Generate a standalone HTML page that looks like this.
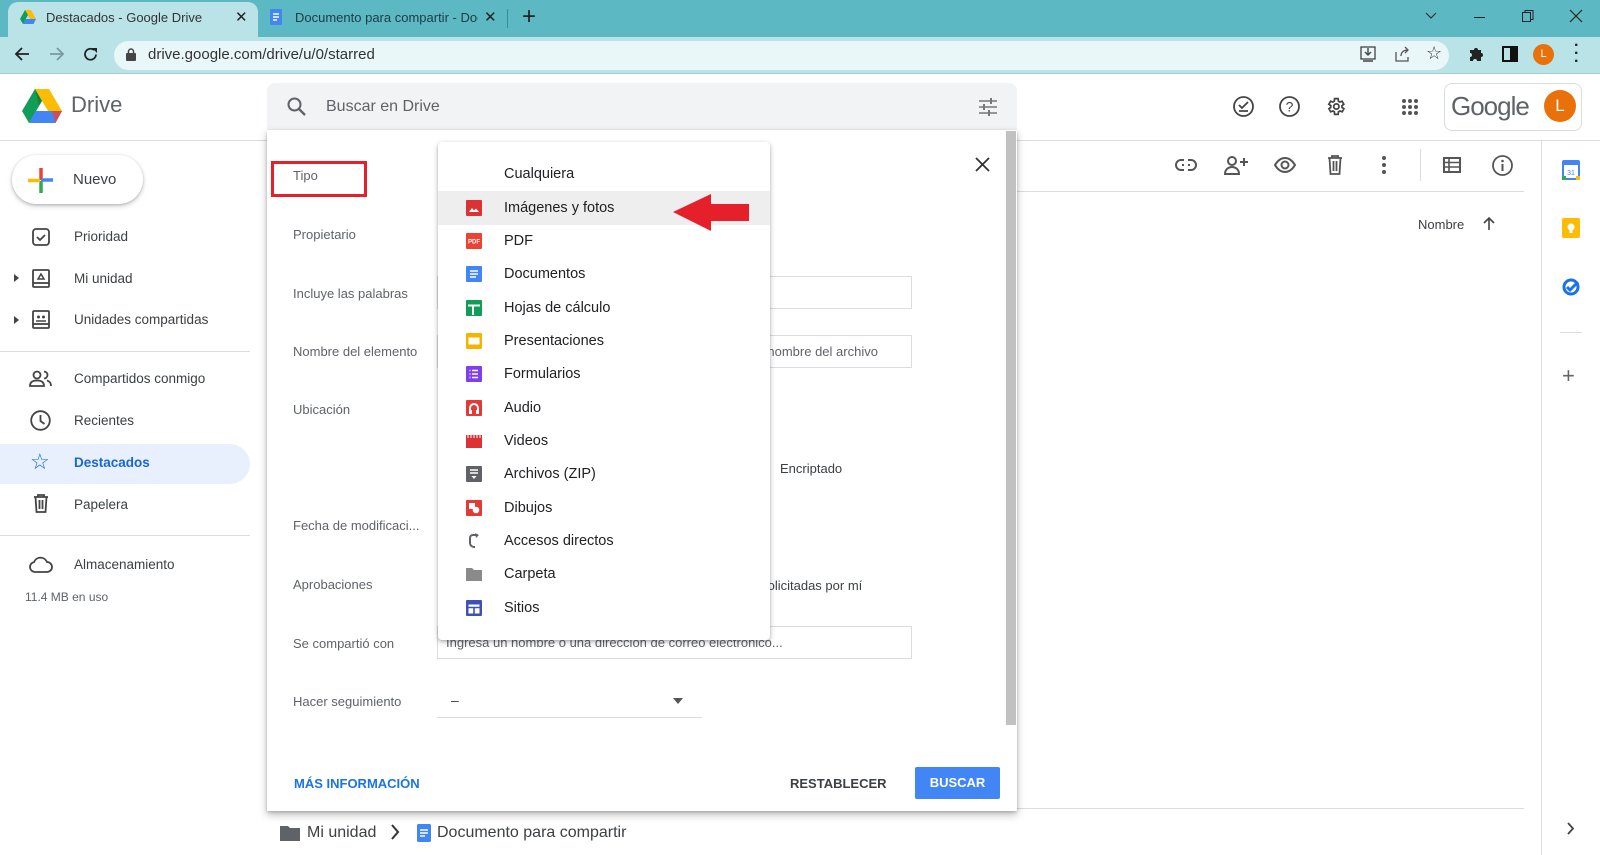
<!DOCTYPE html>
<html><head><meta charset="utf-8"><style>
*{box-sizing:border-box;margin:0;padding:0}
body{width:1600px;height:855px;overflow:hidden;background:#fff;font-family:"Liberation Sans",Arial,sans-serif;color:#3c4043;position:relative}
.a{position:absolute}
.t{position:absolute;white-space:nowrap}
svg{position:absolute;overflow:visible}
</style></head><body>
<!-- tab bar -->
<div class="a" style="left:0;top:0;width:1600px;height:37px;background:#5cb8c2"></div>
<div class="a" style="left:8px;top:2px;width:250px;height:36px;background:#b9e3e7;border-radius:10px 10px 0 0"></div>
<svg style="left:20px;top:10px" width="16" height="14" viewBox="0 0 16 14"><path d="M5 0h6l5 9h-6z" fill="#fbbc04"/><path d="M5 0l3 5-5 9-3-5z" fill="#0f9d58"/><path d="M3 14l2.5-5H16l-2.5 5z" fill="#4285f4"/></svg>
<div class="t" style="left:46px;top:10px;font-size:13px;color:#333">Destacados - Google Drive</div>
<div class="t" style="left:235px;top:8px;font-size:15px;color:#222">✕</div>
<svg style="left:270px;top:9px" width="12" height="16"><rect width="12" height="16" rx="1.5" fill="#4285f4"/><path d="M3 5h6M3 8h6M3 11h4" stroke="#fff" stroke-width="1.4"/></svg>
<div class="t" style="left:295px;top:10px;font-size:13px;color:#1d3c40;width:183px;overflow:hidden">Documento para compartir - Docs</div>
<div class="t" style="left:484px;top:8px;font-size:15px;color:#222">✕</div>
<div class="a" style="left:507px;top:9px;width:1px;height:19px;background:#3d8a92"></div>
<div class="t" style="left:522px;top:3px;font-size:24px;color:#222">+</div>
<svg style="left:1425px;top:12px" width="12" height="8"><path d="M1 1l5 5 5-5" stroke="#333" fill="none" stroke-width="1.2"/></svg>
<div class="a" style="left:1474px;top:17px;width:11px;height:1.3px;background:#222"></div>
<svg style="left:1522px;top:10px" width="12" height="12"><rect x="0.5" y="2.5" width="8" height="9" fill="none" stroke="#222"/><path d="M3 2.5V.5h8v9H9" fill="none" stroke="#222"/></svg>
<svg style="left:1570px;top:10px" width="12" height="12"><path d="M0 0l12 12M12 0L0 12" stroke="#222" stroke-width="1.2"/></svg>
<!-- toolbar -->
<div class="a" style="left:0;top:37px;width:1600px;height:37px;background:#b9e3e7;border-bottom:1px solid #9ccfd4"></div>
<div class="a" style="left:114px;top:41px;width:1335px;height:29px;background:#eaf7f8;border-radius:15px"></div>
<svg style="left:14px;top:47px" width="16" height="14"><path d="M15 7H2M8 1L2 7l6 6" stroke="#222" fill="none" stroke-width="1.8"/></svg>
<svg style="left:49px;top:47px" width="16" height="14"><path d="M1 7h13M8 1l6 6-6 6" stroke="#7a9a9d" fill="none" stroke-width="1.8"/></svg>
<svg style="left:83px;top:47px" width="15" height="15"><path d="M13 7.5A5.5 5.5 0 1 1 11 3" stroke="#222" fill="none" stroke-width="1.8"/><path d="M9 1h5v5z" fill="#222"/></svg>
<svg style="left:126px;top:48px" width="10" height="13"><rect x="0" y="5" width="10" height="8" rx="1" fill="#444"/><path d="M2.5 5V3.5a2.5 2.5 0 0 1 5 0V5" stroke="#444" fill="none" stroke-width="1.5"/></svg>
<div class="t" style="left:148px;top:46px;font-size:15px;color:#333">drive.google.com/drive/u/0/starred</div>
<svg style="left:1360px;top:46px" width="16" height="16"><rect x="1" y="1" width="14" height="12" fill="none" stroke="#444" stroke-width="1.3"/><path d="M8 2v7M5 6l3 3 3-3M3 15h10" stroke="#444" fill="none" stroke-width="1.4"/></svg>
<svg style="left:1394px;top:46px" width="16" height="16"><path d="M2 6v9h12v-4M7 10c0-4 3-6 7-6M11 1l3 3-3 3" stroke="#555" fill="none" stroke-width="1.3"/></svg>
<div class="t" style="left:1426px;top:43px;font-size:18px;color:#333">☆</div>
<svg style="left:1468px;top:46px" width="16" height="16"><path d="M2 4h4a2 2 0 0 1 4 0h3v3a2 2 0 0 1 0 4v4H9a2 2 0 0 0-4 0H2v-4a2 2 0 0 0 0-4z" fill="#222"/></svg>
<svg style="left:1502px;top:46px" width="16" height="16"><rect x="1" y="1" width="14" height="14" fill="none" stroke="#111" stroke-width="2"/><rect x="8" y="1" width="7" height="14" fill="#111"/></svg>
<div class="a" style="left:1533px;top:44px;width:21px;height:21px;border-radius:50%;background:#e8710a;color:#fff;font-size:11px;text-align:center;line-height:21px">L</div>
<div class="t" style="left:1574px;top:42px;font-size:16px;color:#222;font-weight:bold;line-height:8px">·<br>·<br>·</div>
<!-- app header -->
<div class="a" style="left:0;top:140px;width:1600px;height:1px;background:#dadce0"></div>
<svg style="left:22px;top:89px" width="40" height="34" viewBox="0 0 40 34"><path d="M13 0h14l13 22H26z" fill="#fbbc04"/><path d="M13 0l7 12L7 34 0 22z" fill="#0f9d58"/><path d="M7 34l6.5-12H40l-6.5 12z" fill="#4285f4"/><path d="M33.5 34L40 22H30z" fill="#ea4335" opacity=".8"/><path d="M13 0l7 12 -3 4z" fill="#188038"/></svg>
<div class="t" style="left:71px;top:92px;font-size:22px;color:#5f6368">Drive</div>
<div class="a" style="left:267px;top:83px;width:750px;height:48px;background:#f1f3f4;border-radius:8px 8px 0 0"></div>
<svg style="left:287px;top:97px" width="20" height="20"><circle cx="7.5" cy="7.5" r="6" stroke="#5f6368" stroke-width="2" fill="none"/><path d="M12 12l6 6" stroke="#5f6368" stroke-width="2.3"/></svg>
<div class="t" style="left:326px;top:98px;font-size:16px;color:#5f6368">Buscar en Drive</div>
<svg style="left:978px;top:98px" width="20" height="18"><path d="M1 3h18M1 9h18M1 15h18" stroke="#777" stroke-width="1.6"/><path d="M13 0v6M6 6v6M11 12v6" stroke="#777" stroke-width="2"/></svg>
<svg style="left:1233px;top:96px" width="21" height="21"><circle cx="10.5" cy="10.5" r="9.5" stroke="#444" stroke-width="1.8" fill="none"/><path d="M6 9l3 3 6-6M6 15h9" stroke="#444" stroke-width="1.8" fill="none"/></svg>
<svg style="left:1279px;top:96px" width="21" height="21"><circle cx="10.5" cy="10.5" r="9.5" stroke="#444" stroke-width="1.8" fill="none"/><text x="10.5" y="15.5" font-size="14" text-anchor="middle" fill="#444" font-family="Liberation Sans">?</text></svg>
<svg style="left:1325px;top:96px" width="21" height="21" viewBox="0 0 24 24"><path d="M19.4 13a7.5 7.5 0 0 0 0-2l2.1-1.6-2-3.5-2.5 1a7.5 7.5 0 0 0-1.7-1L15 3h-4l-.4 2.9a7.5 7.5 0 0 0-1.7 1l-2.5-1-2 3.5L6.6 11a7.5 7.5 0 0 0 0 2l-2.1 1.6 2 3.5 2.5-1a7.5 7.5 0 0 0 1.7 1L11 21h4l.4-2.9a7.5 7.5 0 0 0 1.7-1l2.5 1 2-3.5z" fill="none" stroke="#444" stroke-width="2"/><circle cx="13" cy="12" r="3" fill="none" stroke="#444" stroke-width="2"/></svg>
<svg style="left:1401px;top:98px" width="18" height="18"><g fill="#555"><circle cx="3" cy="3" r="2"/><circle cx="9" cy="3" r="2"/><circle cx="15" cy="3" r="2"/><circle cx="3" cy="9" r="2"/><circle cx="9" cy="9" r="2"/><circle cx="15" cy="9" r="2"/><circle cx="3" cy="15" r="2"/><circle cx="9" cy="15" r="2"/><circle cx="15" cy="15" r="2"/></g></svg>
<div class="a" style="left:1444px;top:83px;width:138px;height:48px;border:1px solid #dadce0;border-radius:8px"></div>
<div class="t" style="left:1451px;top:91px;font-size:26px;color:#5f6368;letter-spacing:-1px">Google</div>
<div class="a" style="left:1544px;top:90px;width:32px;height:32px;border-radius:50%;background:#e8710a;color:#fff;font-size:17px;text-align:center;line-height:32px">L</div>
<!-- second toolbar -->
<div class="a" style="left:1017px;top:191px;width:507px;height:1px;background:#dadce0"></div>
<div class="a" style="left:1541px;top:141px;width:1px;height:714px;background:#dadce0"></div>
<svg style="left:1175px;top:159px" width="22" height="12"><rect x="1" y="1" width="20" height="10" rx="5" fill="none" stroke="#555" stroke-width="2"/><path d="M7 6h8" stroke="#555" stroke-width="2"/><rect x="9" y="0" width="4" height="12" fill="#fff"/></svg>
<svg style="left:1224px;top:155px" width="24" height="20"><circle cx="8" cy="6" r="4" fill="none" stroke="#555" stroke-width="2"/><path d="M1 19c0-5 4-7 7-7s7 2 7 7z" fill="none" stroke="#555" stroke-width="2"/><path d="M20 3v8M16 7h8" stroke="#555" stroke-width="2"/></svg>
<svg style="left:1274px;top:157px" width="22" height="16"><path d="M1 8c3-5 6-7 10-7s7 2 10 7c-3 5-6 7-10 7S4 13 1 8z" fill="none" stroke="#555" stroke-width="2"/><circle cx="11" cy="8" r="3.5" fill="none" stroke="#555" stroke-width="2"/></svg>
<svg style="left:1327px;top:155px" width="16" height="20"><path d="M1 3h14M5 3V1h6v2M2.5 3l1 16h9l1-16M6.5 6v10M9.5 6v10" fill="none" stroke="#555" stroke-width="1.8"/></svg>
<svg style="left:1382px;top:156px" width="4" height="18"><circle cx="2" cy="2" r="2" fill="#555"/><circle cx="2" cy="9" r="2" fill="#555"/><circle cx="2" cy="16" r="2" fill="#555"/></svg>
<div class="a" style="left:1420px;top:149px;width:1px;height:32px;background:#dadce0"></div>
<svg style="left:1443px;top:157px" width="18" height="16"><rect x="1" y="1" width="16" height="14" fill="none" stroke="#555" stroke-width="2"/><path d="M1 5.5h16M1 10h16M6 1v14" stroke="#555" stroke-width="1.6"/></svg>
<svg style="left:1492px;top:155px" width="21" height="21"><circle cx="10.5" cy="10.5" r="9.5" stroke="#555" stroke-width="1.8" fill="none"/><path d="M10.5 9v7" stroke="#555" stroke-width="2"/><circle cx="10.5" cy="6" r="1.3" fill="#555"/></svg>
<div class="t" style="left:1418px;top:217px;font-size:13px;color:#3c4043">Nombre</div>
<svg style="left:1483px;top:216px" width="12" height="14"><path d="M6 14V2M1 7l5-5 5 5" stroke="#444" stroke-width="1.6" fill="none"/></svg>
<div class="a" style="left:1017px;top:808px;width:507px;height:1px;background:#dadce0"></div>
<!-- right panel -->
<svg style="left:1562px;top:160px" width="18" height="20"><rect x="0" y="0" width="18" height="20" rx="2" fill="#4285f4"/><rect x="2" y="5" width="14" height="13" fill="#fff"/><rect x="0" y="16" width="4" height="4" fill="#34a853"/><rect x="14" y="16" width="4" height="4" fill="#fbbc04"/><text x="9" y="15" font-size="7" text-anchor="middle" fill="#4285f4" font-family="Liberation Sans">31</text></svg>
<svg style="left:1562px;top:218px" width="18" height="20"><rect width="18" height="20" rx="2" fill="#fbbc04"/><circle cx="9" cy="9" r="3.5" fill="#fff"/><rect x="7.5" y="12" width="3" height="3" fill="#fff"/></svg>
<svg style="left:1562px;top:278px" width="18" height="18"><circle cx="9" cy="9" r="7" fill="none" stroke="#1a73e8" stroke-width="3"/><path d="M5 9l3 3 8-8" stroke="#1a73e8" stroke-width="3" fill="none"/></svg>
<div class="a" style="left:1560px;top:332px;width:22px;height:1px;background:#dadce0"></div>
<div class="t" style="left:1562px;top:363px;font-size:22px;color:#666">+</div>
<svg style="left:1567px;top:822px" width="8" height="13"><path d="M1 1l5 5.5L1 12" stroke="#444" stroke-width="1.8" fill="none"/></svg>
<!-- sidebar -->
<div class="a" style="left:12px;top:155px;width:131px;height:49px;border-radius:25px;background:#fff;box-shadow:0 1px 3px rgba(60,64,67,.35),0 3px 6px rgba(60,64,67,.12)"></div>
<svg style="left:28px;top:168px" width="25" height="25"><path d="M13 0v12" stroke="#ea4335" stroke-width="3.5"/><path d="M13 12h12" stroke="#4285f4" stroke-width="3.5"/><path d="M13 13v12" stroke="#34a853" stroke-width="3.5"/><path d="M0 12.5h12" stroke="#fbbc04" stroke-width="3.5"/></svg>
<div class="t" style="left:73px;top:171px;font-size:15px;color:#3c4043">Nuevo</div>
<div class="a" style="left:0;top:444px;width:250px;height:40px;background:#e8f0fe;border-radius:0 20px 20px 0"></div>
<div class="a" style="left:0;top:351px;width:250px;height:1px;background:#dadce0"></div>
<div class="a" style="left:0;top:535px;width:250px;height:1px;background:#dadce0"></div>
<svg style="left:14px;top:274px" width="6" height="8"><path d="M0 0l5 4-5 4z" fill="#444"/></svg>
<svg style="left:14px;top:316px" width="6" height="8"><path d="M0 0l5 4-5 4z" fill="#444"/></svg>
<svg style="left:32px;top:228px" width="18" height="18"><rect x="1" y="1" width="16" height="16" rx="3" fill="none" stroke="#444" stroke-width="1.8"/><path d="M5 9l3 3 5-5" stroke="#444" stroke-width="1.8" fill="none"/></svg>
<svg style="left:32px;top:269px" width="18" height="19"><rect x="1" y="1" width="16" height="17" rx="1" fill="none" stroke="#444" stroke-width="1.8"/><path d="M1 14h16" stroke="#444" stroke-width="1.8"/><path d="M6 10l3-5 3 5z" fill="none" stroke="#444" stroke-width="1.5"/></svg>
<svg style="left:32px;top:310px" width="18" height="19"><rect x="1" y="1" width="16" height="17" rx="1" fill="none" stroke="#444" stroke-width="1.8"/><path d="M1 14h16" stroke="#444" stroke-width="1.8"/><circle cx="6.5" cy="7" r="1.5" fill="#444"/><circle cx="11.5" cy="7" r="1.5" fill="#444"/><path d="M4 11h10" stroke="#444" stroke-width="1.5"/></svg>
<svg style="left:29px;top:370px" width="24" height="17"><circle cx="8" cy="5" r="3.5" fill="none" stroke="#444" stroke-width="1.8"/><path d="M1 16c0-4 3-5.5 7-5.5s7 1.5 7 5.5z" fill="none" stroke="#444" stroke-width="1.8"/><path d="M15 1.5a3.5 3.5 0 0 1 0 7M18 10.5c3 1 4 2.5 4 5.5" fill="none" stroke="#444" stroke-width="1.8"/></svg>
<svg style="left:30px;top:410px" width="21" height="21"><circle cx="10.5" cy="10.5" r="9.3" fill="none" stroke="#444" stroke-width="1.8"/><path d="M10.5 5v6l4 3" fill="none" stroke="#444" stroke-width="1.8"/></svg>
<div class="t" style="left:30px;top:449px;font-size:22px;color:#1967d2">☆</div>
<svg style="left:33px;top:494px" width="16" height="19"><path d="M1 3h14M5 3V1h6v2M2.5 3l1 15h9l1-15M6.5 6v9M9.5 6v9" fill="none" stroke="#444" stroke-width="1.8"/></svg>
<svg style="left:29px;top:557px" width="24" height="16"><path d="M6 15a5 5 0 0 1-1-9.9A7 7 0 0 1 18 5a5 5 0 0 1 0 10z" fill="none" stroke="#444" stroke-width="1.8"/></svg>
<div class="t" style="left:74px;top:229px;font-size:13.5px;color:#3c4043">Prioridad</div>
<div class="t" style="left:74px;top:271px;font-size:13.5px;color:#3c4043">Mi unidad</div>
<div class="t" style="left:74px;top:312px;font-size:13.5px;color:#3c4043">Unidades compartidas</div>
<div class="t" style="left:74px;top:371px;font-size:13.5px;color:#3c4043">Compartidos conmigo</div>
<div class="t" style="left:74px;top:413px;font-size:13.5px;color:#3c4043">Recientes</div>
<div class="t" style="left:74px;top:455px;font-size:13.5px;color:#1967d2;font-weight:bold">Destacados</div>
<div class="t" style="left:74px;top:497px;font-size:13.5px;color:#3c4043">Papelera</div>
<div class="t" style="left:74px;top:557px;font-size:13.5px;color:#3c4043">Almacenamiento</div>
<div class="t" style="left:25px;top:590px;font-size:12px;color:#5f6368">11.4 MB en uso</div>
<!-- breadcrumb -->
<svg style="left:280px;top:824px" width="20" height="17"><path d="M0 2h8l2 2h10v13H0z" fill="#5f6368"/></svg>
<div class="t" style="left:307px;top:824px;font-size:16px;color:#3c4043">Mi unidad</div>
<svg style="left:391px;top:824px" width="9" height="16"><path d="M1 1l6 7-6 7" stroke="#333" stroke-width="2" fill="none"/></svg>
<svg style="left:417px;top:824px" width="14" height="18"><rect width="14" height="18" rx="1.5" fill="#4285f4"/><path d="M3 6h8M3 9h8M3 12h5" stroke="#fff" stroke-width="1.5"/></svg>
<div class="t" style="left:437px;top:824px;font-size:16px;color:#3c4043">Documento para compartir</div>
<!-- dialog -->
<div class="a" style="left:267px;top:130px;width:750px;height:681px;background:#fff;box-shadow:0 4px 8px rgba(0,0,0,.25),0 1px 3px rgba(0,0,0,.2)"></div>
<div class="a" style="left:1006px;top:131px;width:10px;height:594px;background:#c1c1c1"></div>
<svg style="left:975px;top:157px" width="15" height="15"><path d="M1 1l13 13M14 1L1 14" stroke="#333" stroke-width="1.8"/></svg>
<div class="a" style="left:271px;top:161px;width:96px;height:36px;border:3px solid #e5202a"></div>
<div class="t" style="left:293px;top:168px;font-size:13px;color:#5f6368">Tipo</div>
<div class="t" style="left:293px;top:227px;font-size:13px;color:#5f6368">Propietario</div>
<div class="t" style="left:293px;top:286px;font-size:13px;color:#5f6368">Incluye las palabras</div>
<div class="t" style="left:293px;top:344px;font-size:13px;color:#5f6368">Nombre del elemento</div>
<div class="t" style="left:293px;top:402px;font-size:13px;color:#5f6368">Ubicación</div>
<div class="t" style="left:293px;top:518px;font-size:13px;color:#5f6368">Fecha de modificaci...</div>
<div class="t" style="left:293px;top:577px;font-size:13px;color:#5f6368">Aprobaciones</div>
<div class="t" style="left:293px;top:636px;font-size:13px;color:#5f6368">Se compartió con</div>
<div class="t" style="left:293px;top:694px;font-size:13px;color:#5f6368">Hacer seguimiento</div>
<div class="a" style="left:437px;top:276px;width:475px;height:33px;border:1px solid #dadce0"></div>
<div class="a" style="left:437px;top:335px;width:475px;height:33px;border:1px solid #dadce0"></div>
<div class="t" style="left:500px;top:344px;font-size:13px;color:#5f6368">Ingresa un término que coincida con parte del nombre del archivo</div>
<div class="t" style="left:780px;top:461px;font-size:13px;color:#3c4043">Encriptado</div>
<div class="t" style="left:678px;top:578px;font-size:13px;color:#3c4043">Aprobaciones solicitadas por mí</div>
<div class="a" style="left:437px;top:626px;width:475px;height:33px;border:1px solid #dadce0"></div>
<div class="t" style="left:446px;top:635px;font-size:13px;color:#5f6368">Ingresa un nombre o una dirección de correo electrónico...</div>
<div class="t" style="left:451px;top:692px;font-size:14px;color:#3c4043">–</div>
<svg style="left:673px;top:698px" width="10" height="6"><path d="M0 0h10L5 6z" fill="#555"/></svg>
<div class="a" style="left:437px;top:717px;width:265px;height:1px;background:#dadce0"></div>
<div class="t" style="left:294px;top:776px;font-size:13px;color:#1a73e8;font-weight:bold">MÁS INFORMACIÓN</div>
<div class="t" style="left:790px;top:776px;font-size:13px;color:#3c4043;font-weight:bold">RESTABLECER</div>
<div class="a" style="left:915px;top:767px;width:85px;height:32px;background:#4285f4;border-radius:2px;color:#fff;font-size:13px;font-weight:bold;text-align:center;line-height:32px">BUSCAR</div>
<!-- menu -->
<div class="a" style="left:438px;top:142px;width:332px;height:498px;background:#fff;border-radius:4px;box-shadow:0 2px 6px rgba(0,0,0,.25),0 1px 2px rgba(0,0,0,.15)"></div>
<div class="a" style="left:438px;top:191px;width:332px;height:34px;background:#eeeeee"></div>
<div class="t" style="left:504px;top:166px;font-size:14.5px;color:#202124">Cualquiera</div>
<div class="t" style="left:504px;top:200px;font-size:14.5px;color:#202124">Imágenes y fotos</div>
<div class="t" style="left:504px;top:233px;font-size:14.5px;color:#202124">PDF</div>
<div class="t" style="left:504px;top:266px;font-size:14.5px;color:#202124">Documentos</div>
<div class="t" style="left:504px;top:300px;font-size:14.5px;color:#202124">Hojas de cálculo</div>
<div class="t" style="left:504px;top:333px;font-size:14.5px;color:#202124">Presentaciones</div>
<div class="t" style="left:504px;top:366px;font-size:14.5px;color:#202124">Formularios</div>
<div class="t" style="left:504px;top:400px;font-size:14.5px;color:#202124">Audio</div>
<div class="t" style="left:504px;top:433px;font-size:14.5px;color:#202124">Videos</div>
<div class="t" style="left:504px;top:466px;font-size:14.5px;color:#202124">Archivos (ZIP)</div>
<div class="t" style="left:504px;top:500px;font-size:14.5px;color:#202124">Dibujos</div>
<div class="t" style="left:504px;top:533px;font-size:14.5px;color:#202124">Accesos directos</div>
<div class="t" style="left:504px;top:566px;font-size:14.5px;color:#202124">Carpeta</div>
<div class="t" style="left:504px;top:600px;font-size:14.5px;color:#202124">Sitios</div>
<svg style="left:466px;top:200px" width="16" height="16"><rect width="16" height="16" rx="1" fill="#db3236"/><path d="M3 12l3-4 2 2.5 2-2 3 3.5z" fill="#fff"/></svg>
<svg style="left:466px;top:233px" width="16" height="16"><rect width="16" height="16" rx="1" fill="#ea4335"/><text x="8" y="10.5" font-size="6" font-weight="bold" text-anchor="middle" fill="#fff" font-family="Liberation Sans">PDF</text></svg>
<svg style="left:466px;top:266px" width="16" height="16"><rect width="16" height="16" rx="1" fill="#4285f4"/><path d="M4 5h8M4 8h8M4 11h6" stroke="#fff" stroke-width="1.4"/></svg>
<svg style="left:466px;top:300px" width="16" height="16"><rect width="16" height="16" rx="1" fill="#0f9d58"/><path d="M2 5.5h12M7 5.5V15" stroke="#fff" stroke-width="2"/></svg>
<svg style="left:466px;top:333px" width="16" height="16"><rect width="16" height="16" rx="1" fill="#f4b400"/><rect x="2.5" y="4.5" width="11" height="7" fill="#fff"/></svg>
<svg style="left:466px;top:366px" width="16" height="16"><rect width="16" height="16" rx="1" fill="#7e3ff2"/><path d="M6 4.5h6M6 8h6M6 11.5h6M3.5 4.5h1M3.5 8h1M3.5 11.5h1" stroke="#fff" stroke-width="1.4"/></svg>
<svg style="left:466px;top:400px" width="16" height="16"><rect width="16" height="16" rx="1" fill="#e53935"/><path d="M4 12V8a4 4 0 0 1 8 0v4" stroke="#fff" stroke-width="2" fill="none"/><rect x="3" y="10" width="3" height="4" fill="#fff"/><rect x="10" y="10" width="3" height="4" fill="#fff"/></svg>
<svg style="left:466px;top:435px" width="16" height="13"><rect width="16" height="13" fill="#db3236"/><path d="M2 0v3M5 0v3M8 0v3M11 0v3M14 0v3" stroke="#fff" stroke-width="1"/></svg>
<svg style="left:466px;top:466px" width="16" height="16"><rect width="16" height="16" rx="1" fill="#5f6368"/><path d="M4 4h8M4 7h8" stroke="#fff" stroke-width="1.4"/><path d="M5.5 10h5l-2.5 3z" fill="#fff"/></svg>
<svg style="left:466px;top:500px" width="16" height="16"><rect width="16" height="16" rx="1" fill="#e53935"/><rect x="3" y="3" width="6" height="6" fill="#fff"/><circle cx="10" cy="10" r="3.3" fill="#fff"/></svg>
<svg style="left:468px;top:533px" width="12" height="17"><path d="M9 2H5a3 3 0 0 0-3 3v5a4 4 0 0 0 4 4h1" stroke="#5f6368" stroke-width="2" fill="none"/><path d="M7 0l4 2-3 3z" fill="#5f6368"/></svg>
<svg style="left:466px;top:568px" width="16" height="13"><path d="M0 0h6l2 2h8v11H0z" fill="#8a8a8a"/></svg>
<svg style="left:466px;top:600px" width="16" height="16"><rect width="16" height="16" rx="1" fill="#3f51b5"/><rect x="2.5" y="4.5" width="11" height="9" fill="#fff"/><path d="M2.5 7.5h11M8 7.5v6" stroke="#3f51b5" stroke-width="1.6"/></svg>
<!-- arrow -->
<svg style="left:673px;top:194px" width="76" height="37"><path d="M0 18L38 0v10h38v17H38v10z" fill="#e5202a"/></svg>
</body></html>
